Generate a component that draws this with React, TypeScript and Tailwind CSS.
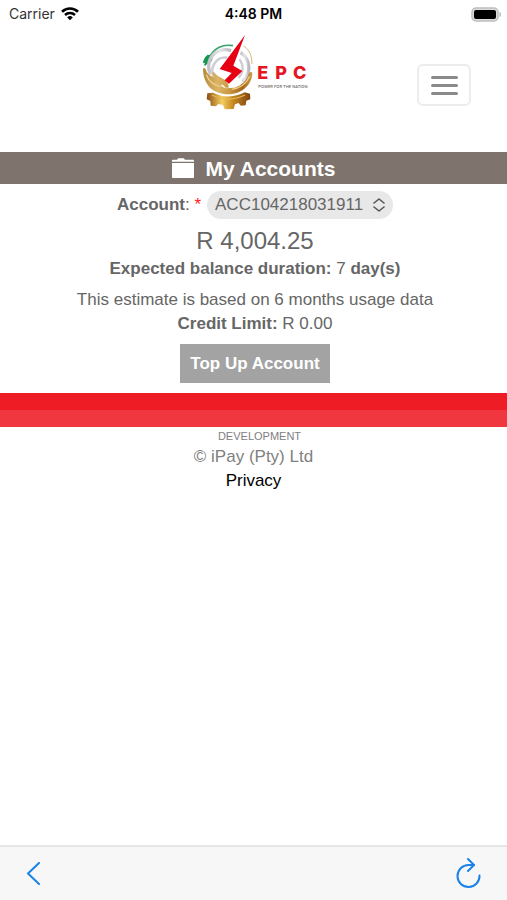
import React, { useState } from 'react';

const ACCOUNTS = ['ACC104218031911'];

const WifiIcon = () => (
  <svg className="h-[14px] w-[18px]" viewBox="0 0 18 14" fill="none" stroke="#000" aria-hidden="true">
    <path d="M1 4.700a11.6 11.6 0 0 1 16 0" strokeWidth="2.7" />
    <path d="M4 8a7.4 7.4 0 0 1 10 0" strokeWidth="2.5" />
    <path d="M9 13.300 6.200 10.400a4 4 0 0 1 5.600 0z" fill="#000" stroke="none" />
  </svg>
);

const BatteryIcon = () => (
  <svg className="h-[15px] w-[32px]" viewBox="0 0 32 15" aria-hidden="true">
    <rect x="1" y="1" width="26" height="13" rx="4" fill="#ddd" stroke="#bdbdbd" strokeWidth="1.5" />
    <rect x="3" y="3" width="22" height="9" rx="2" fill="#000" />
    <path d="M28.500 5c2 .6 2 4.400 0 5z" fill="#b5b5b5" />
  </svg>
);

const FolderIcon = () => (
  <svg className="h-5 w-[22px]" viewBox="0 0 22 20" fill="#fff" aria-hidden="true">
    <path d="M0 3.800V2.600c0-.5.3-.8.8-.8h4.200L6 .6c.2-.3.500-.4.900-.4h4.200c.4 0 .7.100.9.400l.9 1.200h8.300c.5 0 .8.300.8.800v1.200z" />
    <path d="M0 5h22v14.200a.8.8 0 0 1-.8.8H.8a.8.8 0 0 1-.8-.8z" />
  </svg>
);

const Logo = () => (
  <svg className="h-[77px] w-[111px]" viewBox="25 18 333 231" role="img" aria-label="EPC">
    <defs>
      <linearGradient id="gold" x1="0" x2="1">
        <stop offset="0" stopColor="#b58a3c" />
        <stop offset=".3" stopColor="#dcb566" />
        <stop offset=".55" stopColor="#c99540" />
        <stop offset=".8" stopColor="#a5651c" />
        <stop offset="1" stopColor="#cda04a" />
      </linearGradient>
      <linearGradient id="gear" x1="0" x2="1">
        <stop offset="0" stopColor="#8a4c12" />
        <stop offset=".35" stopColor="#f3cf62" />
        <stop offset=".6" stopColor="#c88a22" />
        <stop offset="1" stopColor="#7d420e" />
      </linearGradient>
      <linearGradient id="silver" x1="0" x2="1">
        <stop offset="0" stopColor="#c2c1c7" />
        <stop offset=".5" stopColor="#e6e6ea" />
        <stop offset="1" stopColor="#b9b8be" />
      </linearGradient>
    </defs>
    <path d="M58 90C72 62 98 47 130 53" fill="none" stroke="#35a468" strokeWidth="5" />
    <path d="m40 101 6-13 8-8 11 2 4 10-6 13-11 3-5 5-4-2 3-7-5 2z" fill="#169550" />
    <path d="M63 139a50 50 0 0 1 61-71" fill="none" stroke="url(#silver)" strokeWidth="10" />
    <path d="M76 151a39 39 0 0 1 37-62" fill="none" stroke="#cfced4" strokeWidth="8" />
    <path d="M153 73c32 24 31 64 6 88" fill="none" stroke="url(#silver)" strokeWidth="10" />
    <path d="M149 94c15 19 12 41-3 56" fill="none" stroke="#cfced4" strokeWidth="7" />
    <path d="M162 54c17 11 25 29 25 54" fill="none" stroke="#d9b873" strokeWidth="3" />
    <path d="M40 124c0-5 5-5 8 0 3 9 7 14 14 19l13 5c-8-9-9-17-2-15 7 9 17 14 26 19 13 6 18 13 18 27h-10c-4-6-8-9-12-10 1 7 6 10 13 12l27-2c19-6 36-20 42-41 2-7 9-8 11-3 0 34-31 63-71 64-45 1-76-27-77-75z" fill="url(#gold)" />
    <path d="M50 140c7 19 24 33 47 35" fill="none" stroke="#ecd08a" strokeWidth="4" />
    <path d="M126 184c27-3 44-17 54-39" fill="none" stroke="#edcf83" strokeWidth="4" />
    <path d="m53 196 17-2c29 15 66 15 95-1l16 4 1 17-12 4-2 14-15 1-6-8-11 4-4 14-27 1-5-13-14-3-7 7-16-2-1-14-11-5z" fill="url(#gear)" />
    <path d="M67 201c31 15 68 15 99 0" fill="none" stroke="#e5b64f" strokeWidth="4" />
    <path d="M166 21 90 123l36 12-21 22 13 10 40-38-27-16z" fill="#e60012" />
    <g fill="#e31622" fontFamily="Inter, sans-serif" fontWeight="800" fontSize="54">
      <text x="203" y="154">E</text>
      <text x="257" y="154">P</text>
      <text x="310" y="154">C</text>
    </g>
    <text x="206" y="179" fill="#666" fontFamily="Inter, sans-serif" fontWeight="500" fontSize="12">POWER FOR THE NATION</text>
  </svg>
);

const StatusBar = () => (
  <div className="grid grid-cols-3 items-center h-7 px-1 font-[Inter,sans-serif] text-sm text-black">
    <div className="flex items-center gap-[6px] pl-[5px]">
      <span className="text-[#333]">Carrier</span>
      <WifiIcon />
    </div>
    <span className="text-center font-semibold">4:48 PM</span>
    <div className="flex justify-end">
      <BatteryIcon />
    </div>
  </div>
);

const Header = () => (
  <header className="grid grid-cols-[1fr_auto_1fr] items-start h-[124px] pt-[6px]">
    <div />
    <Logo />
    <button aria-label="Menu" className="justify-self-end mt-[30px] mr-9 flex flex-col items-center justify-center gap-[5px] h-[42px] w-[54px] rounded-md border-2 border-[#ececec]">
      <span className="h-[3px] w-[27px] rounded-full bg-[#8a8a8a]" />
      <span className="h-[3px] w-[27px] rounded-full bg-[#8a8a8a]" />
      <span className="h-[3px] w-[27px] rounded-full bg-[#8a8a8a]" />
    </button>
  </header>
);

const AccountPicker: React.FC<{ value: string; onChange: (value: string) => void }> = ({ value, onChange }) => (
  <div className="flex items-center justify-center">
    <label htmlFor="account">
      <b>Account</b>: <span className="text-[#ff1a1a]">*</span>
    </label>
    <div className="relative ml-[6px]">
      <select
        id="account"
        value={value}
        onChange={e => onChange(e.target.value)}
        className="block appearance-none h-7 w-[186px] pl-2 pr-6 rounded-full bg-[#e8e8e8] text-[#666]"
      >
        {ACCOUNTS.map(account => (
          <option key={account}>{account}</option>
        ))}
      </select>
      <svg className="pointer-events-none absolute right-2 top-[7px] h-[14px] w-3" viewBox="0 0 12 14" fill="none" stroke="#555" strokeWidth="1.6" strokeLinecap="round" strokeLinejoin="round" aria-hidden="true">
        <path d="m1 5 5-4 5 4M1 9l5 4 5-4" />
      </svg>
    </div>
  </div>
);

const BrowserBar = () => (
  <nav className="mt-auto flex items-center justify-between h-[55px] px-[26px] border-t-2 border-[#e6e6e6] bg-[#f7f7f7]">
    <button aria-label="Back">
      <svg className="h-6 w-[15px]" viewBox="0 0 15 24" fill="none" stroke="#1b82e8" strokeWidth="2" strokeLinecap="round" strokeLinejoin="round">
        <path d="M13 1 2 11.500 13 22" />
      </svg>
    </button>
    <button aria-label="Reload">
      <svg className="h-8 w-[25px]" viewBox="0 0 25 32" fill="none" stroke="#1b82e8" strokeWidth="2" strokeLinecap="round" strokeLinejoin="round">
        <path d="M23.500 17.500A11 11 0 1 1 12.500 7H18" />
        <path d="m12 1 6 6-6 6" />
      </svg>
    </button>
  </nav>
);

const App: React.FC = () => {
  const [account, setAccount] = useState(ACCOUNTS[0]);

  return (
    <div className="min-h-screen flex flex-col bg-white font-['Liberation_Sans',Arial,sans-serif] text-[17px] leading-6 text-[#666]">
      <StatusBar />
      <Header />
      <main className="text-center">
        <h1 className="flex items-center justify-center gap-3 h-8 bg-[#7e746d] text-[21px] font-bold text-white">
          <FolderIcon />
          <span className="pt-[2px]">My Accounts</span>
        </h1>
        <div className="pt-[7px] pb-[10px] pl-[3px]">
          <AccountPicker value={account} onChange={setAccount} />
          <p className="mt-[6px] text-2xl leading-8">R 4,004.25</p>
          <p><b>Expected balance duration:</b> 7 <b>day(s)</b></p>
          <p className="mt-[7px]">This estimate is based on 6 months usage data</p>
          <p><b>Credit Limit:</b> R 0.00</p>
          <button className="mt-2 h-[39px] px-[10px] bg-[#a3a3a3] font-bold text-white">Top Up Account</button>
        </div>
      </main>
      <div className="h-[17px] bg-[#ee1c25]" />
      <div className="h-[17px] bg-[#f0373f]" />
      <footer className="text-center text-[#808080]">
        <p className="pl-3 text-[11px] leading-[18px]">DEVELOPMENT</p>
        <p>© iPay (Pty) Ltd</p>
        <a href="#privacy" className="text-black">Privacy</a>
      </footer>
      <BrowserBar />
    </div>
  );
};

export default App;
